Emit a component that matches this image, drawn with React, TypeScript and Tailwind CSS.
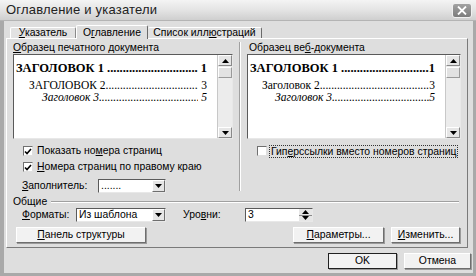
import React from "react";

function U({ c }: { c: string }) {
  return <span className="underline underline-offset-[1px]">{c}</span>;
}

function Arrow({ dir }: { dir: "up" | "down" }) {
  return (
    <svg width="7" height="4" viewBox="0 0 7 4">
      {dir === "up" ? <path d="M0 4 L3.5 0 L7 4 Z" fill="#000" /> : <path d="M0 0 L7 0 L3.5 4 Z" fill="#000" />}
    </svg>
  );
}

function Btn({ children, w, def }: { children: React.ReactNode; w: string; def?: boolean }) {
  return (
    <div
      className={`${w} h-[16px] flex items-center justify-center bg-[#f2f2f2] border ${
        def ? "border-[#202020]" : "border-t-[#ffffff] border-l-[#ffffff] border-r-[#6e6e6e] border-b-[#6e6e6e]"
      } shadow-[1px_1px_0_#9a9a9a]`}
    >
      {children}
    </div>
  );
}

function Check({ on }: { on?: boolean }) {
  return (
    <div className="w-[10px] h-[10px] shrink-0 bg-white border border-t-[#707070] border-l-[#707070] border-r-[#e0e0e0] border-b-[#e0e0e0] flex items-center justify-center">
      {on ? (
        <svg width="8" height="7" viewBox="0 0 8 7">
          <path d="M1 3.5 L3 5.5 L7 1" stroke="#000" strokeWidth="1.6" fill="none" />
        </svg>
      ) : null}
    </div>
  );
}

function Scroll() {
  return (
    <div className="w-[15px] shrink-0 flex flex-col bg-[#ececec] border-l border-[#c8c8c8]">
      <div className="h-[11px] bg-[#e6e6e6] border border-t-white border-l-white border-r-[#8a8a8a] border-b-[#8a8a8a] flex items-center justify-center">
        <Arrow dir="up" />
      </div>
      <div className="h-[11px] mt-[1px] bg-[#e2e2e2] border border-t-white border-l-white border-r-[#9a9a9a] border-b-[#9a9a9a]" />
      <div className="flex-1" />
      <div className="h-[11px] bg-[#e6e6e6] border border-t-white border-l-white border-r-[#8a8a8a] border-b-[#8a8a8a] flex items-center justify-center">
        <Arrow dir="down" />
      </div>
    </div>
  );
}

function Dots({ bold }: { bold?: boolean }) {
  return (
    <span className={`flex-1 min-w-0 w-0 overflow-hidden whitespace-nowrap ${bold ? "font-bold" : ""}`}>
      ..........................................................................
    </span>
  );
}

function Preview({ web }: { web?: boolean }) {
  return (
    <div className="h-[85px] flex bg-white border border-t-[#5a5a5a] border-l-[#5a5a5a] border-r-[#e8e8e8] border-b-[#e8e8e8]">
      <div className="flex-1 min-w-0 flex flex-col font-['Liberation_Serif',serif] text-black pt-[6px] pl-[2px] pr-[10px]">
        <div className="flex items-baseline text-[12.5px] font-bold leading-[14px]">
          <span className="shrink-0 whitespace-nowrap">ЗАГОЛОВОК 1&nbsp;</span>
          <Dots bold />
          <span className="shrink-0">{web ? "1" : "\u00a01"}</span>
        </div>
        <div className={`flex items-baseline text-[11.5px] leading-[12px] mt-[4px] ${web ? "pl-[12px]" : "pl-[13px]"}`}>
          <span className="shrink-0 whitespace-nowrap">{web ? "Заголовок 2" : "ЗАГОЛОВОК 2"}</span>
          <Dots />
          <span className="shrink-0">{web ? "3" : "\u00a03"}</span>
        </div>
        <div className={`flex items-baseline text-[11.5px] italic leading-[12px] ${web ? "pl-[25px]" : "pl-[26px]"}`}>
          <span className="shrink-0 whitespace-nowrap">Заголовок 3</span>
          <Dots />
          <span className="shrink-0">{web ? "5" : "\u00a05"}</span>
        </div>
      </div>
      <Scroll />
    </div>
  );
}

function Combo({ w, text }: { w: string; text: string }) {
  return (
    <div className={`${w} h-[14px] flex bg-white border border-t-[#5a5a5a] border-l-[#5a5a5a] border-r-[#e8e8e8] border-b-[#e8e8e8]`}>
      <div className="flex-1 pl-[2px] leading-[12px] overflow-hidden whitespace-nowrap">{text}</div>
      <div className="w-[13px] bg-[#e6e6e6] border border-t-white border-l-white border-r-[#6e6e6e] border-b-[#6e6e6e] flex items-center justify-center">
        <Arrow dir="down" />
      </div>
    </div>
  );
}

export default function App() {
  return (
    <div className="w-[476px] h-[276px] flex flex-col bg-[#dedede] font-['Liberation_Sans',sans-serif] text-[10.4px] text-black overflow-hidden">
      <div className="h-[21px] flex items-center justify-between pl-[6px] pr-[4px] bg-gradient-to-b from-[#f4f4f4] via-[#e4e4e4] to-[#cfcfcf] border-b border-[#b4b4b4]">
        <span className="text-[13px] tracking-[0.2px] text-[#222]">Оглавление и указатели</span>
        <div className="w-[20px] h-[15px] rounded-[3px] bg-gradient-to-b from-[#a2a2a2] to-[#7c7c7c] border border-[#f0f0f0] flex items-center justify-center">
          <svg width="10" height="9" viewBox="0 0 10 9">
            <path d="M1 0.5 L9 8.5 M9 0.5 L1 8.5" stroke="#fff" strokeWidth="1.8" />
          </svg>
        </div>
      </div>
      <div className="flex-1 flex flex-col border-l-[4px] border-r-[3px] border-b-[3px] border-[#a9a9a9]">
        <div className="flex items-end h-[17px] pl-[6px]">
          <div className="w-[66px] h-[11px] flex items-center justify-center border-t border-l border-white border-r border-r-[#8a8a8a] rounded-t-[2px] bg-[#e2e2e2]">
            <span><U c="У" />казатель</span>
          </div>
          <div className="w-[72px] h-[14px] mb-[-1px] z-10 flex items-center justify-center border-t border-l border-white border-r border-r-[#6a6a6a] rounded-t-[2px] bg-[#dedede]">
            <span>О<U c="г" />лавление</span>
          </div>
          <div className="w-[114px] h-[11px] flex items-center justify-center border-t border-white border-r border-r-[#6a6a6a] rounded-t-[2px] bg-[#e2e2e2]">
            <span>Список илл<U c="ю" />страций</span>
          </div>
        </div>
        <div className="ml-[2px] w-[462px] h-[210px] flex flex-col border border-t-white border-l-white border-r-[#7a7a7a] border-b-[#7a7a7a] pl-[6px] pr-[6px]">
          <div className="flex">
            <div className="w-[220px] flex flex-col">
              <div className="h-[13px] mt-[2px] leading-[13px]"><U c="О" />бразец печатного документа</div>
              <Preview />
              <div className="flex items-center h-[12px] mt-[6px] pl-[10px] gap-[4px]">
                <Check on />
                <span className="whitespace-nowrap">Показать но<U c="м" />ера страниц</span>
              </div>
              <div className="flex items-center h-[12px] mt-[4px] pl-[10px] gap-[4px]">
                <Check on />
                <span className="whitespace-nowrap"><U c="Н" />омера страниц по правому краю</span>
              </div>
              <div className="flex items-center h-[14px] mt-[6px] pl-[9px]">
                <span className="w-[76px]"><U c="З" />аполнитель:</span>
                <Combo w="w-[68px]" text="......." />
              </div>
            </div>
            <div className="w-[2px] mx-[6px] mt-[3px] mb-[2px] border-l border-[#a0a0a0] border-r border-r-white" />
            <div className="w-[214px] flex flex-col">
              <div className="h-[13px] mt-[2px] leading-[13px] pl-[2px]">Образец ве<U c="б" />-документа</div>
              <Preview web />
              <div className="flex items-center h-[12px] mt-[6px] pl-[10px] gap-[3px]">
                <Check />
                <span className="whitespace-nowrap outline outline-1 outline-dotted outline-[#333] px-[1px] leading-[11px]">Гип<U c="е" />рссылки вместо номеров страниц</span>
              </div>
            </div>
          </div>
          <div className="flex items-center h-[13px] mt-[2px] pr-[2px]">
            <span>Общие</span>
            <div className="flex-1 ml-[4px] h-[2px] border-t border-[#a0a0a0] border-b border-b-white" />
          </div>
          <div className="flex items-center h-[14px] pl-[9px]">
            <span className="w-[54px]"><U c="Ф" />орматы:</span>
            <Combo w="w-[90px]" text="Из шаблона" />
            <span className="ml-[17px] w-[62px]">Уро<U c="в" />ни:</span>
            <div className="w-[68px] h-[14px] flex bg-white border border-t-[#5a5a5a] border-l-[#5a5a5a] border-r-[#e8e8e8] border-b-[#e8e8e8]">
              <div className="flex-1 pl-[2px] leading-[12px]">3</div>
              <div className="w-[13px] flex flex-col">
                <div className="flex-1 bg-[#e6e6e6] border-b border-[#8a8a8a] flex items-center justify-center"><Arrow dir="up" /></div>
                <div className="flex-1 bg-[#e6e6e6] flex items-center justify-center"><Arrow dir="down" /></div>
              </div>
            </div>
          </div>
          <div className="flex items-center mt-[5px] pl-[3px] pr-[1px]">
            <Btn w="w-[130px]"><span><U c="П" />анель структуры</span></Btn>
            <div className="flex-1" />
            <Btn w="w-[91px]"><span><U c="П" />араметры...</span></Btn>
            <div className="w-[7px]" />
            <Btn w="w-[69px]"><span><U c="И" />зменить...</span></Btn>
          </div>
        </div>
        <div className="flex justify-end items-center mt-[5px] pr-[2px]">
          <Btn w="w-[69px]" def>OK</Btn>
          <div className="w-[7px]" />
          <Btn w="w-[67px]">Отмена</Btn>
        </div>
      </div>
    </div>
  );
}
